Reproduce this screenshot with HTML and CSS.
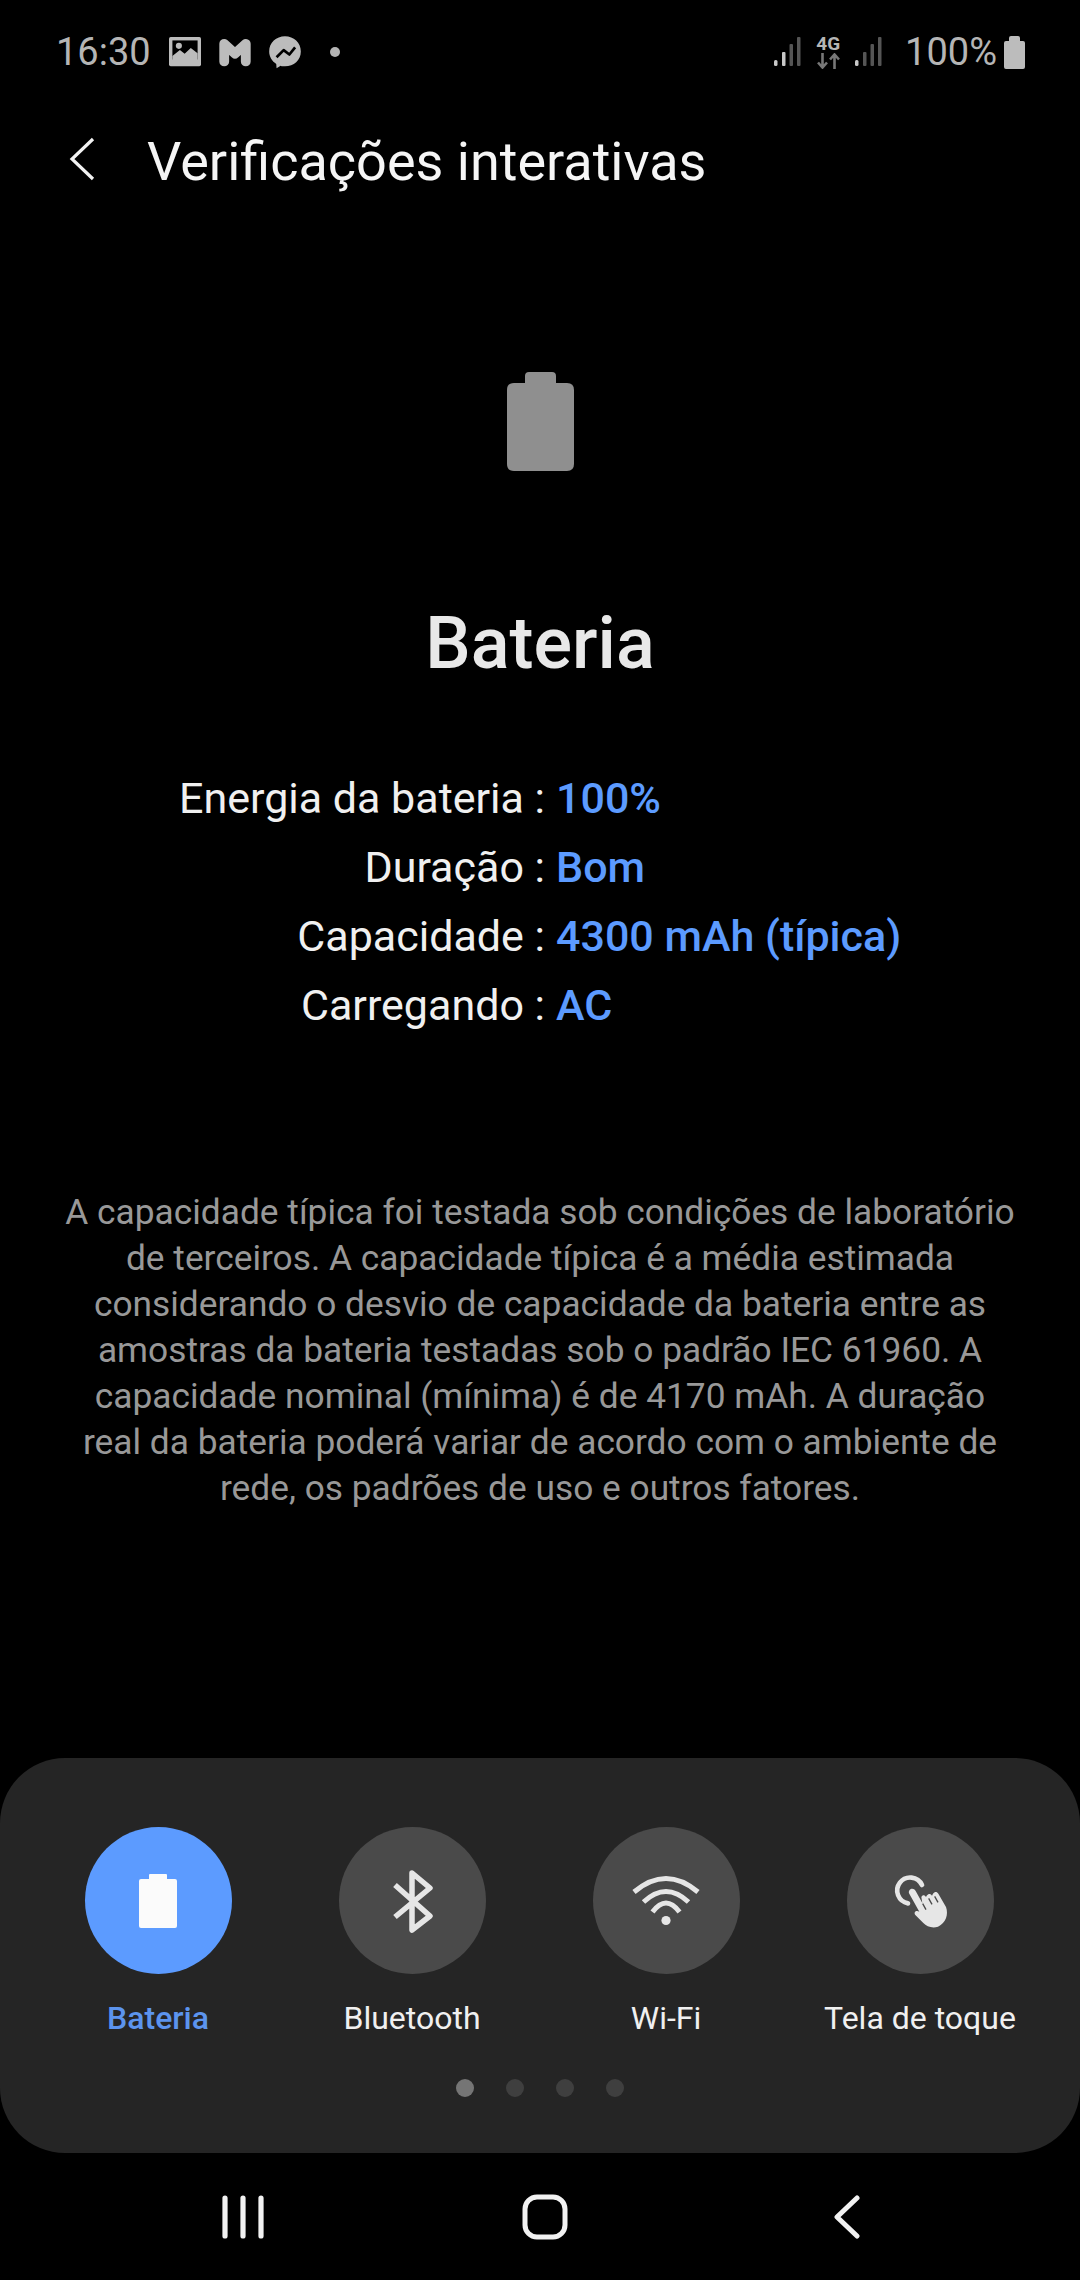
FILE: index.html
```html
<!DOCTYPE html>
<html lang="pt-BR">
<head>
 <meta charset="UTF-8">
 <title>Verificações interativas</title>
 <link rel="stylesheet" href="styles.css">
</head>
<body>
<div class="phone">

  <div class="status">
    <div class="status-left">
      <span class="status-text">16:30</span>
      <svg class="st-icon" width="32" height="30" viewBox="28 22 94 88">
        <rect x="28" y="22" width="94" height="86" rx="5" fill="#bcbcbc"/>
        <rect x="38" y="32" width="74" height="56" fill="#000"/>
        <circle cx="57" cy="48" r="9" fill="#bcbcbc"/>
        <path d="M38 78 L60 60 L74 71 L92 54 L112 70 V98 H38 Z" fill="#bcbcbc"/>
      </svg>
      <svg class="st-icon" width="32" height="30" viewBox="176 22 98 90">
        <path d="M192 96 V42 L225 72 L258 42 V96" fill="none" stroke="#bcbcbc" stroke-width="30" stroke-linecap="round" stroke-linejoin="round"/>
      </svg>
      <svg class="st-icon" width="32" height="33" viewBox="328 18 94 98">
        <path d="M375 19 C401 19 422 38 422 64 C422 90 401 108 375 108 C370 108 366 108 362 106 L350 114 L349 101 C337 93 328 80 328 64 C328 38 349 19 375 19 Z" fill="#bcbcbc"/>
        <path d="M350 81 L371 60 L388 73 L405 52" fill="none" stroke="#000" stroke-width="8" stroke-linejoin="round"/>
      </svg>
      <span class="status-dot"></span>
    </div>
    <div class="status-right">
      <svg width="27" height="30" viewBox="0 0 27 30">
        <rect x="0" y="23" width="3.5" height="6" rx="1.5" fill="#c8c8c8"/>
        <rect x="8" y="15" width="3.5" height="14" rx="1" fill="#c8c8c8"/>
        <rect x="15.5" y="7" width="3.5" height="22" rx="1" fill="#555"/>
        <rect x="23" y="0" width="3.5" height="29" rx="1" fill="#555"/>
      </svg>
      <div class="net">
        <span class="net-label">4G</span>
        <svg width="23" height="16" viewBox="0 0 23 16">
          <path d="M5.5 0 V14 M1 9.5 L5.5 14.5 L10 9.5" fill="none" stroke="#777" stroke-width="2.6"/>
          <path d="M17.5 16 V2 M13 6.5 L17.5 1.5 L22 6.5" fill="none" stroke="#777" stroke-width="2.6"/>
        </svg>
      </div>
      <svg width="27" height="30" viewBox="0 0 27 30">
        <rect x="0" y="23" width="3.5" height="6" rx="1.5" fill="#c8c8c8"/>
        <rect x="8" y="15" width="3.5" height="14" rx="1" fill="#555"/>
        <rect x="15.5" y="7" width="3.5" height="22" rx="1" fill="#555"/>
        <rect x="23" y="0" width="3.5" height="29" rx="1" fill="#555"/>
      </svg>
      <span class="status-text pct">100%</span>
      <svg class="st-batt" width="21" height="33" viewBox="0 0 21 33">
        <path d="M5 2 Q5 0 7 0 H14 Q16 0 16 2 V5 H19 Q21 5 21 7 V31 Q21 33 19 33 H2 Q0 33 0 31 V7 Q0 5 2 5 H5 Z" fill="#bcbcbc"/>
      </svg>
    </div>
  </div>

  <div class="header">
    <svg class="back" width="26" height="44" viewBox="0 0 26 44">
      <path d="M24 2 L3 22 L24 42" fill="none" stroke="#f2f2f2" stroke-width="3.2"/>
    </svg>
    <h1>Verificações interativas</h1>
  </div>

  <div class="main">
    <svg class="big-batt" width="67" height="99" viewBox="0 0 67 99">
      <path d="M18 4 Q18 0 22 0 H45 Q49 0 49 4 V11 H60 Q67 11 67 18 V92 Q67 99 60 99 H7 Q0 99 0 92 V18 Q0 11 7 11 H18 Z" fill="#8f8f8f"/>
    </svg>
    <h2>Bateria</h2>

    <div class="info">
      <span class="lbl">Energia da bateria :</span><span class="val">100%</span>
      <span class="lbl">Duração :</span><span class="val">Bom</span>
      <span class="lbl">Capacidade :</span><span class="val">4300 mAh (típica)</span>
      <span class="lbl">Carregando :</span><span class="val">AC</span>
    </div>

    <p class="note">A capacidade típica foi testada sob condições de laboratório<br>de terceiros. A capacidade típica é a média estimada<br>considerando o desvio de capacidade da bateria entre as<br>amostras da bateria testadas sob o padrão IEC 61960. A<br>capacidade nominal (mínima) é de 4170 mAh. A duração<br>real da bateria poderá variar de acordo com o ambiente de<br>rede, os padrões de uso e outros fatores.</p>
  </div>

  <div class="panel">
    <div class="tabs">
      <div class="tab active">
        <div class="circle">
          <svg width="38" height="54" viewBox="0 0 38 54">
            <path d="M10 1 Q10 0 11 0 H27 Q28 0 28 1 V5 H36 Q38 5 38 7 V52 Q38 54 36 54 H2 Q0 54 0 52 V7 Q0 5 2 5 H10 Z" fill="#fbfbfb"/>
          </svg>
        </div>
        <span class="tab-label">Bateria</span>
      </div>
      <div class="tab">
        <div class="circle">
          <svg width="80" height="80" viewBox="-40 -40 80 80">
            <path d="M-17 -16 L18 15 L0 29 V-28 L18 -13 L-17 16" fill="none" stroke="#e6e6e6" stroke-width="5.5" stroke-linejoin="round"/>
          </svg>
        </div>
        <span class="tab-label">Bluetooth</span>
      </div>
      <div class="tab">
        <div class="circle">
          <svg width="80" height="80" viewBox="-40 -40 80 80">
            <g fill="none" stroke="#e6e6e6" stroke-width="5">
              <path d="M-32 -9 Q0 -36 32 -9"/>
              <path d="M-22.5 1 Q0 -20 22.5 1"/>
              <path d="M-13.5 11 Q0 -7 13.5 11"/>
            </g>
            <circle cx="0" cy="19.5" r="4.6" fill="#e6e6e6"/>
          </svg>
        </div>
        <span class="tab-label">Wi-Fi</span>
      </div>
      <div class="tab">
        <div class="circle">
          <svg width="80" height="80" viewBox="0 0 240 240">
            <path d="M126 72 A39 39 0 1 0 84 127" fill="none" stroke="#e6e6e6" stroke-width="14" stroke-linecap="round"/>
            <path d="M87 97 C84 84 100 78 107 90 L127 126 L124 108 C128 100 134 102 138 108 L140 104 C146 96 152 98 156 104 L159 98 C165 90 171 92 175 98 L198 138 C206 160 198 186 174 197 C156 203 140 196 130 186 L106 162 C100 154 108 146 118 152 Z" fill="#e6e6e6"/>
            <path d="M128 128 L138 146 M146 112 L156 130 M164 106 L174 124" stroke="#4a4a4a" stroke-width="4" fill="none"/>
          </svg>
        </div>
        <span class="tab-label">Tela de toque</span>
      </div>
    </div>
    <div class="dots">
      <span class="dot on"></span>
      <span class="dot"></span>
      <span class="dot"></span>
      <span class="dot"></span>
    </div>
  </div>

  <div class="nav">
    <div class="nav-item">
      <svg width="42" height="44" viewBox="0 0 42 44">
        <path d="M3 3 V41 M21 3 V41 M39 3 V41" stroke="#f2f2f2" stroke-width="5.2" stroke-linecap="round" fill="none"/>
      </svg>
    </div>
    <div class="nav-item">
      <svg width="46" height="46" viewBox="0 0 46 46">
        <rect x="3" y="3" width="40" height="40" rx="12" fill="none" stroke="#f2f2f2" stroke-width="5"/>
      </svg>
    </div>
    <div class="nav-item">
      <svg width="26" height="44" viewBox="0 0 26 44">
        <path d="M23 3 L3 22 L23 41" fill="none" stroke="#f2f2f2" stroke-width="5" stroke-linecap="round" stroke-linejoin="round"/>
      </svg>
    </div>
  </div>

</div>
</body>
</html>
```

FILE: styles.css
```css
* {
  box-sizing: border-box;
}

body {
  margin: 0;
  background-color: #000;
  font-family: Roboto, "Noto Sans", sans-serif;
}

.phone {
  width: 1080px;
  height: 2280px;
  display: flex;
  flex-direction: column;
  overflow: hidden;
  background-color: #000;
}

/* barra de status */
.status {
  height: 104px;
  display: flex;
  align-items: center;
  justify-content: space-between;
  padding: 0 55px 0 56px;
}

.status-left, .status-right {
  display: flex;
  align-items: center;
}

.status-left {
  gap: 18px;
}

.status-right {
  gap: 15px;
}

.status-text {
  font-size: 38px;
  line-height: 44px;
  color: #b5b5b5;
}

.status-dot {
  width: 10px;
  height: 10px;
  margin-left: 11px;
  border-radius: 50%;
  background-color: #b5b5b5;
}

.net {
  display: flex;
  flex-direction: column;
  align-items: center;
  gap: 1px;
}

.net-label {
  font-size: 19px;
  line-height: 17px;
  font-weight: 700;
  color: #b5b5b5;
}

.pct {
  margin-left: 8px;
}

.st-batt {
  margin-left: -8px;
}

/* cabecalho */
.header {
  height: 110px;
  display: flex;
  align-items: center;
  padding-left: 69px;
}

.header h1 {
  margin: 0 0 0 52px;
  padding-top: 5px;
  font-size: 54px;
  font-weight: 400;
  color: #f5f5f5;
}

/* conteudo */
.main {
  flex: 1;
  display: flex;
  flex-direction: column;
  align-items: center;
  padding-top: 158px;
}

.big-batt {
  margin-left: 1px;
}

.main h2 {
  margin: 133px 0 0;
  font-size: 72px;
  line-height: 80px;
  font-weight: 500;
  color: #e8e8e8;
}

.info {
  width: 100%;
  margin-top: 80px;
  display: grid;
  grid-template-columns: 545px 1fr;
  column-gap: 11px;
  font-size: 43px;
  line-height: 69px;
}

.lbl {
  text-align: right;
  color: #f0f0f0;
}

.val {
  font-weight: 500;
  color: #5c9bff;
}

.note {
  margin: 149px 0 0;
  font-size: 35.3px;
  line-height: 46px;
  text-align: center;
  color: #989898;
}

/* painel de baixo */
.panel {
  height: 395px;
  padding: 69px 31px 0;
  background-color: #252525;
  border-radius: 65px;
}

.tabs {
  display: grid;
  grid-template-columns: repeat(4, 254px);
}

.tab {
  display: flex;
  flex-direction: column;
  align-items: center;
}

.circle {
  width: 147px;
  height: 147px;
  display: flex;
  align-items: center;
  justify-content: center;
  border-radius: 50%;
  background-color: #4a4a4a;
}

.tab.active .circle {
  background-color: #5c9bff;
}

.tab-label {
  margin-top: 24px;
  font-size: 32px;
  line-height: 40px;
  color: #f0f0f0;
}

.tab.active .tab-label {
  font-weight: 500;
  color: #5c94ee;
}

.dots {
  display: flex;
  justify-content: center;
  gap: 32px;
  margin-top: 41px;
}

.dot {
  width: 18px;
  height: 18px;
  border-radius: 50%;
  background-color: #3f3f3f;
}

.dot.on {
  background-color: #757575;
}

/* navegacao */
.nav {
  height: 127px;
  display: grid;
  grid-template-columns: repeat(3, 302px);
  padding-left: 92px;
}

.nav-item {
  display: flex;
  align-items: center;
  justify-content: center;
}
```
